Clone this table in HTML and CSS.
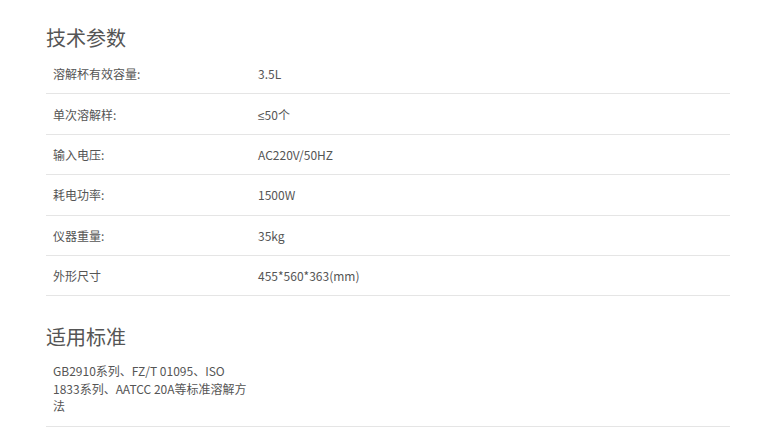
FILE: index.html
```html
<!DOCTYPE html>
<html lang="zh-CN">
<head>
    <meta charset="UTF-8">
    <meta name="viewport" content="width=device-width, initial-scale=1.0">
    <title>技术参数</title>
    <link rel="stylesheet" href="styles.css">
</head>
<body>
    <div class="wrap">
        <!-- 技术参数 -->
        <h2 class="sec-title">技术参数</h2>
        <table class="param-table">
            <tr><td class="label">溶解杯有效容量:</td><td>3.5L</td></tr>
            <tr><td class="label">单次溶解样:</td><td><span class="sym">≤</span>50个</td></tr>
            <tr><td class="label">输入电压:</td><td>AC220V/50HZ</td></tr>
            <tr><td class="label">耗电功率:</td><td>1500W</td></tr>
            <tr><td class="label">仪器重量:</td><td>35kg</td></tr>
            <tr><td class="label">外形尺寸</td><td>455*560*363(mm)</td></tr>
        </table>

        <!-- 适用标准 -->
        <h2 class="sec-title">适用标准</h2>
        <table class="param-table std-table">
            <tr><td class="label">GB2910系列、FZ/T 01095、ISO 1833系列、AATCC 20A等标准溶解方法</td><td></td></tr>
        </table>
    </div>
</body>
</html>
```

FILE: styles.css
```css
body {
    margin: 0;
    background: #fff;
    font-family: "Noto Sans CJK SC", sans-serif;
    color: #555;
}
.wrap {
    width: 684px;
    padding: 21px 0 0 46px;
}
.sec-title {
    margin: 0;
    font-size: 20px;
    font-weight: normal;
    line-height: 33px;
    color: #555;
}
.param-table {
    width: 100%;
    border-collapse: collapse;
    font-size: 12px;
    margin-bottom: 24px;
}
.param-table td {
    padding: 0 7px;
    height: 39.4px;
    border-bottom: 1px solid #e5e5e5;
    vertical-align: middle;
}
.param-table td.label {
    width: 191px;
}
.sym {
    font-family: "Liberation Sans", sans-serif;
}
.std-table td {
    padding: 9px 7px 11px;
    line-height: 17.5px;
    height: auto;
}
.std-table td.label {
    width: 198px;
}
```
